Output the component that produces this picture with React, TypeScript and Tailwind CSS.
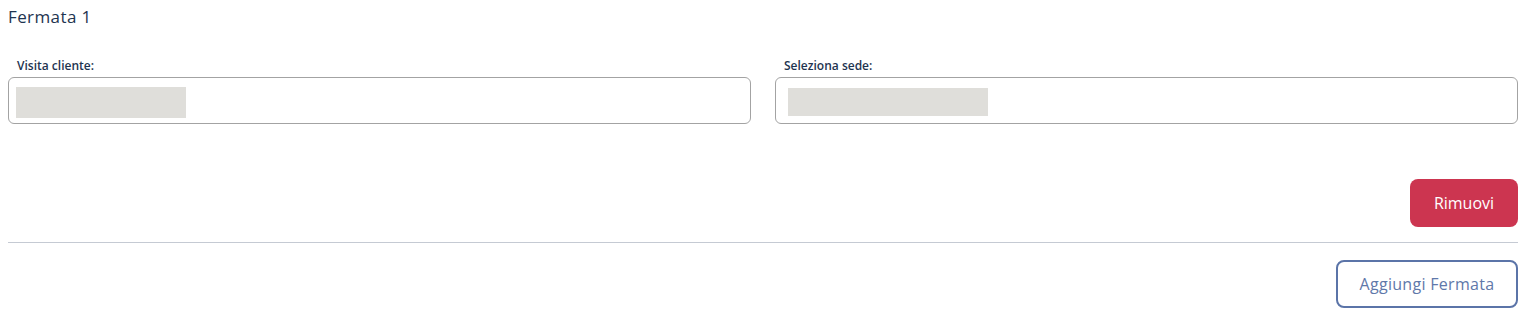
import React from "react";

export default function App() {
  return (
    <div className="w-[1529px] h-[325px] bg-white pl-2 pr-[11px] pt-[7px] text-[#1e3450]" style={{ fontFamily: "'Open Sans', 'Noto Sans', sans-serif" }}>
      <div className="text-[17px] leading-[20px] tracking-[0.4px]">Fermata 1</div>
      <div className="mt-[31px] grid grid-cols-2 gap-x-6">
        <div>
          <div className="pl-[9px] text-[12px] leading-[16px] font-semibold">Visita cliente:</div>
          <div className="mt-[3px] h-[47px] rounded-[6px] border border-[#a3a3a3] pl-[7px] pt-[9px]">
            <div className="w-[170px] h-[31px] bg-[#dfdeda]" />
          </div>
        </div>
        <div>
          <div className="pl-[9px] text-[12px] leading-[16px] font-semibold">Seleziona sede:</div>
          <div className="mt-[3px] h-[47px] rounded-[6px] border border-[#a3a3a3] pl-[12px] pt-[10px]">
            <div className="w-[200px] h-[28px] bg-[#dfdeda]" />
          </div>
        </div>
      </div>
      <div className="mt-[55px] flex justify-end">
        <button className="w-[108px] h-[48px] rounded-[8px] bg-[#cc3550] text-white text-[16px]">Rimuovi</button>
      </div>
      <div className="mt-[15px] h-px bg-[#c5cad3]" />
      <div className="mt-[17px] flex justify-end">
        <button className="w-[182px] h-[48px] rounded-[8px] border-2 border-[#5b74a8] text-[#5f78aa] text-[16px] tracking-[0.3px]">Aggiungi Fermata</button>
      </div>
    </div>
  );
}
